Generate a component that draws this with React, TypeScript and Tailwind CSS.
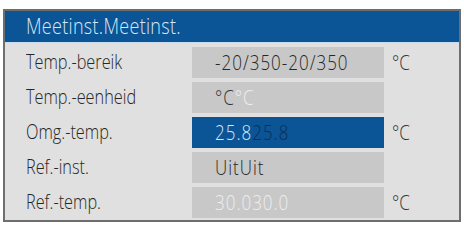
import React from "react";

type Row = {
  label: string;
  value: React.ReactNode;
  unit?: string;
  active?: boolean;
};

const rows: Row[] = [
  { label: "Temp.-bereik", value: <span className="text-[#262626]">-20/350-20/350</span>, unit: "°C" },
  {
    label: "Temp.-eenheid",
    value: (
      <>
        <span className="text-[#333333]">°C</span>
        <span className="text-[#eeeeee]">°C</span>
      </>
    ),
  },
  {
    label: "Omg.-temp.",
    value: (
      <>
        <span className="text-[#d6e8f7]">25.8</span>
        <span className="text-[#0d2f55]">25.8</span>
      </>
    ),
    unit: "°C",
    active: true,
  },
  { label: "Ref.-inst.", value: <span className="text-[#262626]">UitUit</span> },
  { label: "Ref.-temp.", value: <span className="text-[#eeeeee]">30.030.0</span>, unit: "°C" },
];

export default function App() {
  return (
    <div className="w-[464px] h-[226px] bg-white pt-[9px] pl-[3px] font-['Open_Sans',sans-serif] font-light">
      <div className="w-[458px] h-[213px] border-2 border-[#6e6e6e] bg-[#e0e0e0] flex flex-col">
        {/* Header */}
        <div className="h-[32px] bg-[#0b5496] border-b border-[#c9dcee] flex items-center pl-[21px] text-[18px] tracking-[0.3px] text-[#d8e8f6]">
          <span className="inline-block scale-y-[1.2]">Meetinst.Meetinst.</span>
        </div>

        {/* Parameter rows */}
        <div className="flex flex-col gap-[4px] pt-[4px]">
          {rows.map((row) => (
            <div key={row.label} className="flex items-center h-[31px]">
              <span className="w-[187px] pl-[21px] text-[16.3px] text-[#262626]">
                <span className="inline-block scale-y-[1.2]">{row.label}</span>
              </span>
              <div
                className={`w-[192px] h-full flex items-center pl-[23px] text-[17px] tracking-[1px] ${
                  row.active ? "bg-[#0b5496]" : "bg-[#c8c8c8]"
                }`}
              >
                <span className="inline-block scale-y-[1.2]">{row.value}</span>
              </div>
              <span className="pl-[8px] text-[17px] text-[#333333]">
                <span className="inline-block scale-y-[1.2]">{row.unit}</span>
              </span>
            </div>
          ))}
        </div>
      </div>
    </div>
  );
}
